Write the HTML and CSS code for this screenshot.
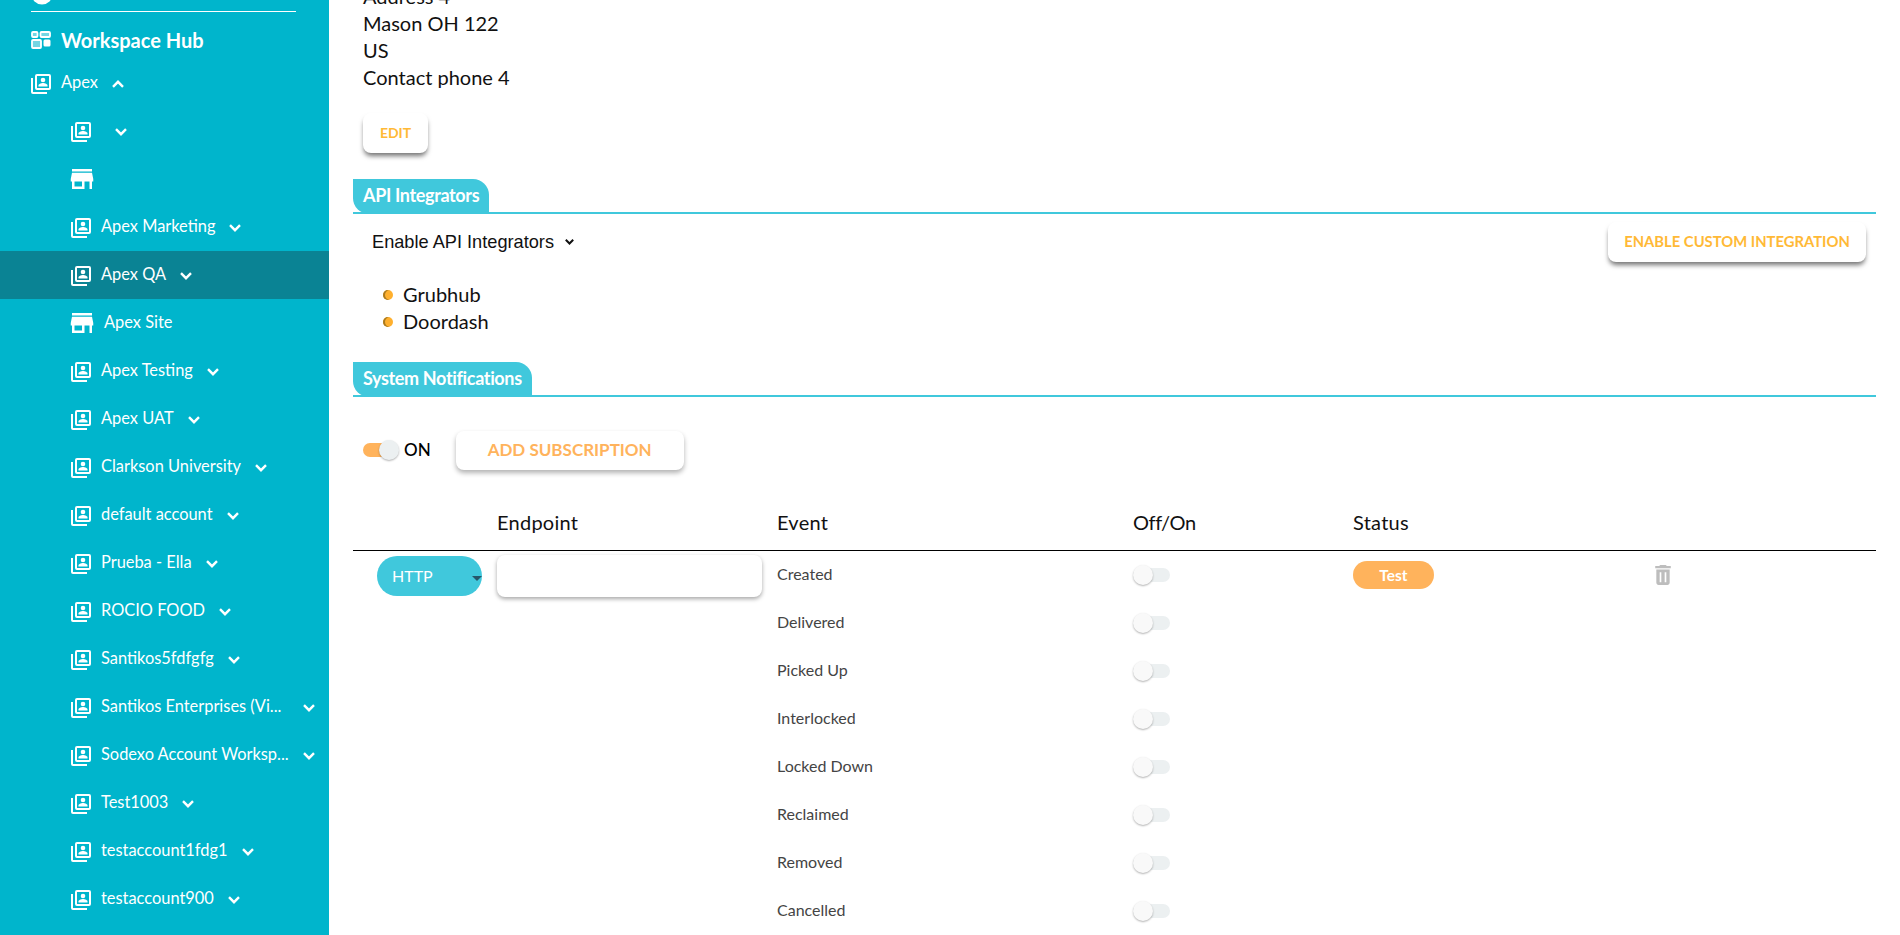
FILE: index.html
```html
<!DOCTYPE html>
<html lang="en">
<head>
<meta charset="utf-8">
<title>Workspace Hub</title>
<link rel="stylesheet" href="styles.css">
</head>
<body>
<svg class="defs" width="0" height="0" aria-hidden="true">
  <defs>
    <symbol id="acct" viewBox="0 0 24 24">
      <path fill="#fff" d="M4 6H2v14a2 2 0 0 0 2 2h14v-2H4V6zm16-4H8a2 2 0 0 0-2 2v12a2 2 0 0 0 2 2h12a2 2 0 0 0 2-2V4a2 2 0 0 0-2-2zm0 14H8V4h12v12z"/>
      <circle fill="#fff" cx="14" cy="8" r="2.3"/>
      <path fill="#fff" d="M9.5 14.5V13.4c0-1.5 3-2.4 4.5-2.4s4.500.9 4.500 2.400v1.100h-9z"/>
    </symbol>
    <symbol id="store" viewBox="0 0 24 24">
      <path fill="#fff" d="M20 4H4v2h16V4zm1 10v-2l-1-5H4l-1 5v2h1v6h10v-6h4v6h2v-6h1zm-9 4H6v-4h6v4z"/>
    </symbol>
    <symbol id="down" viewBox="0 0 12 8">
      <path fill="none" stroke="#fff" stroke-width="2.400" d="M1 1.200l5 5 5-5"/>
    </symbol>
    <symbol id="up" viewBox="0 0 12 8">
      <path fill="none" stroke="#fff" stroke-width="2.400" d="M1 6.800l5-5 5 5"/>
    </symbol>
  </defs>
</svg>
<div class="shell">
  <aside class="sidebar">
    <div class="side-inner">
      <div class="clipped-item">
        <svg class="info-icon" width="22" height="22" viewBox="0 0 22 22"><circle cx="11" cy="11" r="10.500" fill="#fff"/></svg>
        <span>Setup</span>
      </div>
      <div class="side-rule"></div>
      <div class="hub">
        <svg width="20" height="18" viewBox="0 0 20 18">
          <g fill="#fff" fill-opacity=".45" stroke="#fff" stroke-width="1.800">
            <rect x="1" y="1" width="5.500" height="5" rx="1"/>
            <rect x="9.500" y="1" width="9.500" height="5" rx="1"/>
            <rect x="1" y="9" width="9" height="8" rx="1"/>
          </g>
          <rect x="12.500" y="8.500" width="7" height="7" rx="1.500" fill="#fff"/>
        </svg>
        <span>Workspace Hub</span>
      </div>
      <div class="nav-row top">
        <svg class="ico"><use href="#acct"/></svg>
        <span class="label">Apex</span>
        <svg class="chev"><use href="#up"/></svg>
      </div>
      <div class="nav-row">
        <svg class="ico"><use href="#acct"/></svg>
        <span class="label"></span>
        <svg class="chev"><use href="#down"/></svg>
      </div>
      <div class="nav-row shop">
        <svg class="ico-store"><use href="#store"/></svg>
      </div>
      <div class="nav-row">
        <svg class="ico"><use href="#acct"/></svg>
        <span class="label">Apex Marketing</span>
        <svg class="chev"><use href="#down"/></svg>
      </div>
      <div class="nav-row active">
        <svg class="ico"><use href="#acct"/></svg>
        <span class="label">Apex QA</span>
        <svg class="chev"><use href="#down"/></svg>
      </div>
      <div class="nav-row shop">
        <svg class="ico-store"><use href="#store"/></svg>
        <span class="label">Apex Site</span>
      </div>
      <div class="nav-row">
        <svg class="ico"><use href="#acct"/></svg>
        <span class="label">Apex Testing</span>
        <svg class="chev"><use href="#down"/></svg>
      </div>
      <div class="nav-row">
        <svg class="ico"><use href="#acct"/></svg>
        <span class="label">Apex UAT</span>
        <svg class="chev"><use href="#down"/></svg>
      </div>
      <div class="nav-row">
        <svg class="ico"><use href="#acct"/></svg>
        <span class="label">Clarkson University</span>
        <svg class="chev"><use href="#down"/></svg>
      </div>
      <div class="nav-row">
        <svg class="ico"><use href="#acct"/></svg>
        <span class="label">default account</span>
        <svg class="chev"><use href="#down"/></svg>
      </div>
      <div class="nav-row">
        <svg class="ico"><use href="#acct"/></svg>
        <span class="label">Prueba - Ella</span>
        <svg class="chev"><use href="#down"/></svg>
      </div>
      <div class="nav-row">
        <svg class="ico"><use href="#acct"/></svg>
        <span class="label">ROCIO FOOD</span>
        <svg class="chev"><use href="#down"/></svg>
      </div>
      <div class="nav-row">
        <svg class="ico"><use href="#acct"/></svg>
        <span class="label">Santikos5fdfgfg</span>
        <svg class="chev"><use href="#down"/></svg>
      </div>
      <div class="nav-row">
        <svg class="ico"><use href="#acct"/></svg>
        <span class="label wide">Santikos Enterprises (Vi...</span>
        <svg class="chev"><use href="#down"/></svg>
      </div>
      <div class="nav-row">
        <svg class="ico"><use href="#acct"/></svg>
        <span class="label wide">Sodexo Account Worksp...</span>
        <svg class="chev"><use href="#down"/></svg>
      </div>
      <div class="nav-row">
        <svg class="ico"><use href="#acct"/></svg>
        <span class="label">Test1003</span>
        <svg class="chev"><use href="#down"/></svg>
      </div>
      <div class="nav-row">
        <svg class="ico"><use href="#acct"/></svg>
        <span class="label">testaccount1fdg1</span>
        <svg class="chev"><use href="#down"/></svg>
      </div>
      <div class="nav-row">
        <svg class="ico"><use href="#acct"/></svg>
        <span class="label">testaccount900</span>
        <svg class="chev"><use href="#down"/></svg>
      </div>
    </div>
  </aside>

  <main class="main">
    <div class="address">
      <div>Address 4</div>
      <div>Mason OH 122</div>
      <div>US</div>
      <div>Contact phone 4</div>
    </div>
    <button class="btn btn-edit">EDIT</button>

    <div class="sec-head"><div class="sec-tab">API Integrators</div></div>
    <div class="api-row">
      <div class="enable">
        <span>Enable API Integrators</span>
        <svg width="9" height="6" viewBox="0 0 9 6"><path fill="none" stroke="#111" stroke-width="2" d="M.8.8l3.700 3.700L8.200.8"/></svg>
      </div>
      <button class="btn btn-custom">ENABLE CUSTOM INTEGRATION</button>
    </div>
    <ul class="integrators">
      <li>Grubhub</li>
      <li>Doordash</li>
    </ul>

    <div class="sec-head"><div class="sec-tab">System Notifications</div></div>
    <div class="toolbar">
      <div class="switch on"></div>
      <span class="on-label">ON</span>
      <button class="btn btn-add">ADD SUBSCRIPTION</button>
    </div>

    <div class="t-row t-head">
      <div></div>
      <div>Endpoint</div>
      <div>Event</div>
      <div class="off-head">Off/On</div>
      <div>Status</div>
      <div></div>
    </div>
    <div class="t-row">
      <div class="cell"><div class="proto">HTTP</div></div>
      <div class="cell"><input class="endpoint" type="text"></div>
      <div class="cell event">Created</div>
      <div class="cell"><div class="switch off"></div></div>
      <div class="cell"><span class="pill">Test</span></div>
      <div class="cell">
        <svg width="20" height="20" viewBox="4 3 16 18"><path fill="#bdbdbd" d="M6 19c0 1.100.9 2 2 2h8c1.100 0 2-.9 2-2V7H6v12zm3-9.500h1.500v9H9v-9zm4.500 0H15v9h-1.500v-9zM15.500 4l-1-1h-5l-1 1H5v2h14V4h-3.500z"/></svg>
      </div>
    </div>
    <div class="t-row"><div></div><div></div><div class="cell event">Delivered</div><div class="cell"><div class="switch off"></div></div><div></div><div></div></div>
    <div class="t-row"><div></div><div></div><div class="cell event">Picked Up</div><div class="cell"><div class="switch off"></div></div><div></div><div></div></div>
    <div class="t-row"><div></div><div></div><div class="cell event">Interlocked</div><div class="cell"><div class="switch off"></div></div><div></div><div></div></div>
    <div class="t-row"><div></div><div></div><div class="cell event">Locked Down</div><div class="cell"><div class="switch off"></div></div><div></div><div></div></div>
    <div class="t-row"><div></div><div></div><div class="cell event">Reclaimed</div><div class="cell"><div class="switch off"></div></div><div></div><div></div></div>
    <div class="t-row"><div></div><div></div><div class="cell event">Removed</div><div class="cell"><div class="switch off"></div></div><div></div><div></div></div>
    <div class="t-row"><div></div><div></div><div class="cell event">Cancelled</div><div class="cell"><div class="switch off"></div></div><div></div><div></div></div>
  </main>
</div>
</body>
</html>
```
FILE: styles.css
```css
* { box-sizing: border-box; }
html, body { margin: 0; height: 100%; overflow: hidden; }
body { font-family: "Lato", "Noto Sans", sans-serif; color: #111; background: #fff; }
.defs { display: block; height: 0; }
.shell { display: flex; height: 935px; overflow: hidden; }

/* sidebar */
.sidebar { width: 329px; flex: none; background: #00b5cc; color: #fff; overflow: hidden; }
.side-inner { margin-top: -35px; }
.clipped-item { display: flex; align-items: flex-end; gap: 8px; height: 46px; padding-left: 31px; font-size: 18px; font-weight: 700; line-height: 22px; }
.clipped-item span { margin-bottom: 10px; }
.info-icon { margin-bottom: 6px; }
.side-rule { height: 1px; background: #fff; margin: 0 33px 0 31px; }
.hub { display: flex; align-items: center; gap: 10px; height: 36px; margin: 10px 0 1px; padding-left: 31px; font-size: 20px; font-weight: 700; }
.nav-row { display: flex; align-items: center; height: 48px; padding-left: 69px; font-size: 16.4px; }
.nav-row.top { padding-left: 29px; }
.nav-row.active { background: #0a8394; }
.ico { width: 24px; height: 24px; flex: none; margin-right: 8px; margin-top: 1px; }
.ico-store { width: 30px; height: 30px; flex: none; margin: 0 7px 0 -2px; }
.label { white-space: nowrap; margin: -3px 14px 0 0; }
.label.wide { width: 190px; margin-right: 12px; }
.chev { width: 12px; height: 8px; flex: none; margin-top: 1px; }

/* main */
.main { flex: 1; min-width: 0; padding: 0 24px; }
.address { margin-top: -17px; padding-left: 10px; font-size: 20px; line-height: 27px; }
.btn { display: block; border: 0; background: #fff; border-radius: 8px; font-family: inherit; font-weight: 700; padding: 0 0 2px; box-shadow: 0 4px 5px -1px rgba(0,0,0,.55); }
.btn-edit { width: 65px; height: 40px; margin: 22px 0 0 10px; font-size: 14px; color: #ffb936; }
.sec-head { display: flex; height: 35px; margin-top: 26px; border-bottom: 2px solid #40c8dc; }
.sec-tab { height: 35px; padding: 0 10px; background: #40c8dc; color: #fff; font-size: 18px; font-weight: 700; letter-spacing: -.35px; line-height: 32px; border-radius: 0 16px 0 16px; }
.api-row { display: flex; justify-content: space-between; align-items: center; height: 40px; margin-top: 8px; padding: 0 10px 0 19px; }
.enable { display: flex; align-items: center; gap: 11px; font-family: "Liberation Sans", sans-serif; font-size: 18.2px; }
.btn-custom { width: 258px; height: 40px; font-size: 14.8px; color: #ffb936; }
.integrators { list-style: none; margin: 19px 0 0; padding: 0 0 0 50px; font-size: 20px; line-height: 27px; }
.integrators li { position: relative; }
.integrators li::before { content: ""; position: absolute; left: -20px; top: 9px; width: 10px; height: 10px; border-radius: 50%; background: #ffb02e; box-shadow: inset 2px 0 0 #a97a20; }
.integrators + .sec-head { margin-top: 27px; }
.toolbar { display: flex; align-items: center; height: 39px; margin-top: 34px; padding-left: 10px; }
.on-label { margin: -2px 0 0 13px; font-size: 17px; font-weight: 500; color: #000; }
.btn-add { width: 228px; height: 39px; margin-left: 25px; font-size: 17px; color: #ffb35c; box-shadow: 0 3px 5px rgba(0,0,0,.3); }

/* switches */
.switch { position: relative; flex: none; border-radius: 8px; }
.switch::after { content: ""; position: absolute; border-radius: 50%; }
.switch.on { width: 28px; height: 14px; margin-top: -2px; background: #ffb35c; }
.switch.on::after { right: -8px; top: -3px; width: 20px; height: 20px; background: #ecf0f1; box-shadow: 0 1px 2px rgba(0,0,0,.3); }
.switch.off { width: 37px; height: 14px; background: #ecf0f1; }
.switch.off::after { left: 0; top: -3px; width: 20px; height: 20px; background: #f9f9f9; box-shadow: 0 1px 2px rgba(0,0,0,.3); }

/* table */
.t-row { display: grid; grid-template-columns: 144px 280px 356px 220px 300px 1fr; height: 48px; }
.t-head { height: 81px; align-items: end; padding-bottom: 14px; font-size: 20px; line-height: 27px; letter-spacing: .25px; border-bottom: 1px solid #000; }
.off-head { letter-spacing: -.4px; }
.t-head + .t-row { margin-top: 1px; }
.cell { display: flex; align-items: center; height: 46px; }
.event { font-size: 16px; color: #444; padding-bottom: 4px; }
.proto { position: relative; width: 105px; height: 40px; margin: 2px 0 0 24px; padding-left: 15px; border-radius: 20px; background: #40c8dc; color: #fff; font-size: 16px; line-height: 40px; }
.proto::after { content: ""; position: absolute; right: 0; top: 20px; border: 5px solid transparent; border-top: 5px solid #26576a; border-bottom: 0; }
.endpoint { width: 265px; height: 42px; margin-top: 2px; border: 0; border-radius: 8px; background: #fff; box-shadow: 0 2px 4px rgba(0,0,0,.35); }
.pill { width: 81px; height: 28px; border-radius: 14px; background: #ffb35c; color: #fff; font-size: 15.5px; font-weight: 700; line-height: 28px; text-align: center; }
```
